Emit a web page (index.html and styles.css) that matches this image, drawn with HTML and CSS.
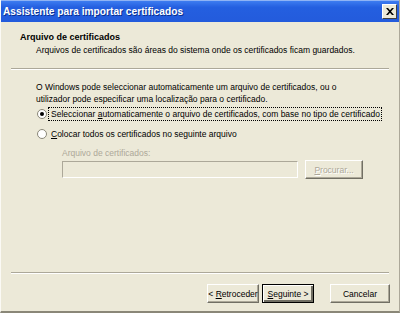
FILE: index.html
```html
<!DOCTYPE html>
<html lang="pt">
<head>
  <meta charset="UTF-8">
  <title>Assistente para importar certificados</title>
  <link rel="stylesheet" href="styles.css">
</head>
<body>

<div class="wizard-window">
  <div class="wizard-titlebar">
    <span class="wizard-title">Assistente para importar certificados</span>
    <button class="wizard-close" aria-label="Fechar">
      <svg viewBox="0 0 8 7" width="8" height="7">
        <path d="M0 0h2l2 2.3L6 0h2L5 3.5 8 7H6L4 4.7 2 7H0l3-3.5z" fill="#000"/>
      </svg>
    </button>
  </div>

  <div class="wizard-header">
    <div class="wizard-heading">Arquivo de certificados</div>
    <div class="wizard-subheading">Arquivos de certificados são áreas do sistema onde os certificados ficam guardados.</div>
  </div>
  <div class="wizard-rule"></div>

  <div class="wizard-content">
    <p class="wizard-intro">O Windows pode seleccionar automaticamente um arquivo de certificados, ou o<br>utilizador pode especificar uma localização para o certificado.</p>

    <label class="wizard-option first">
      <span class="radio checked"></span>
      <span class="option-text focused">Seleccionar <u>a</u>utomaticamente o arquivo de certificados, com base no tipo de certificado</span>
    </label>
    <label class="wizard-option">
      <span class="radio"></span>
      <span class="option-text"><u>C</u>olocar todos os certificados no seguinte arquivo</span>
    </label>

    <div class="store-group">
      <div class="store-label">Arquivo de certificados:</div>
      <div class="store-row">
        <div class="store-input"></div>
        <button class="btn btn-disabled"><u>P</u>rocurar...</button>
      </div>
    </div>
  </div>

  <div class="wizard-rule"></div>

  <div class="wizard-footer">
    <button class="btn btn-back">&lt; <u>R</u>etroceder</button>
    <button class="btn btn-default"><u>S</u>eguinte &gt;</button>
    <button class="btn btn-cancel">Cancelar</button>
  </div>
</div>

</body>
</html>
```

FILE: styles.css
```css
* {
  margin: 0;
  padding: 0;
  box-sizing: border-box;
}

body {
  width: 400px;
  height: 313px;
  overflow: hidden;
  background-color: #ece9d8;
  font-family: "Liberation Sans", Arial, sans-serif;
  font-size: 8.5px;
  line-height: 13px;
  color: #000;
}

.wizard-window {
  width: 400px;
  height: 313px;
  display: flex;
  flex-direction: column;
  border-bottom: 2px solid #8a8778;
  border-left: 1px solid #fbfaf5;
  border-right: 1px solid #aca899;
}

.wizard-titlebar {
  height: 22px;
  flex-shrink: 0;
  display: flex;
  align-items: center;
  justify-content: space-between;
  padding: 0 2px 0 2px;
  background: linear-gradient(to bottom, #3d7cf0 0%, #245fe0 30%, #235bdc 100%);
  border-top: 1px solid #8fb3f5;
}

.wizard-title {
  color: #fff;
  font-weight: bold;
  font-size: 10.2px;
  text-shadow: 1px 1px 0 #0a2f90;
}

.wizard-close {
  width: 15px;
  height: 15px;
  background-color: #ece9d8;
  border: 1px solid;
  border-color: #fff #404040 #404040 #fff;
  display: flex;
  align-items: center;
  justify-content: center;
}

.wizard-header {
  height: 46px;
  flex-shrink: 0;
  padding: 9px 0 0 19px;
}

.wizard-heading {
  font-weight: bold;
  font-size: 9px;
}

.wizard-subheading {
  padding-left: 16px;
}

.wizard-rule {
  margin: 0 10px 0 10px;
  height: 2px;
  border-top: 1px solid #aca899;
  border-bottom: 1px solid #fff;
  flex-shrink: 0;
}

.wizard-content {
  flex-grow: 1;
  padding: 11px 10px 0 35px;
}

.wizard-intro {
  line-height: 12px;
}

.wizard-option {
  display: flex;
  align-items: center;
  gap: 2px;
  height: 20px;
  white-space: nowrap;
}

.wizard-option.first {
  margin-top: -1px;
}

.radio {
  width: 10px;
  height: 10px;
  border-radius: 50%;
  border: 1px solid #8a8778;
  background: #fff;
  margin-left: 1px;
  flex-shrink: 0;
  display: flex;
  align-items: center;
  justify-content: center;
}

.radio.checked::after {
  content: "";
  width: 4px;
  height: 4px;
  border-radius: 50%;
  background: #000;
}

.option-text {
  padding: 0 1px 0 2px;
  line-height: 12px;
}

.option-text.focused {
  outline: 1px dotted #000;
}

.store-group {
  padding: 3px 0 0 26px;
}

.store-label {
  color: #aca899;
  height: 12px;
  line-height: 12px;
}

.store-row {
  display: flex;
  align-items: center;
  gap: 7px;
  margin-top: 1px;
}

.store-input {
  width: 236px;
  height: 17px;
  border: 1px solid;
  border-color: #aca899 #fff #fff #aca899;
  background: #ece9d8;
}

.btn {
  font-family: inherit;
  font-size: inherit;
  background-color: #ece9d8;
  border: 1px solid;
  border-color: #fff #716f64 #716f64 #fff;
  box-shadow: inset -1px -1px 0 #aca899;
  height: 19px;
  padding: 0;
  white-space: nowrap;
}

.btn-disabled {
  width: 58px;
  color: #aca899;
  text-shadow: 1px 1px 0 #fff;
}

.wizard-footer {
  height: 37px;
  flex-shrink: 0;
  display: flex;
  align-items: flex-start;
  padding: 10px 0 0 206px;
}

.btn-back {
  width: 52px;
}

.btn-default {
  width: 52px;
  margin-left: 3px;
  border-color: #000;
  box-shadow: inset 1px 1px 0 #fff, inset -2px -2px 0 #716f64;
}

.btn-cancel {
  width: 60px;
  margin-left: 16px;
}
```
